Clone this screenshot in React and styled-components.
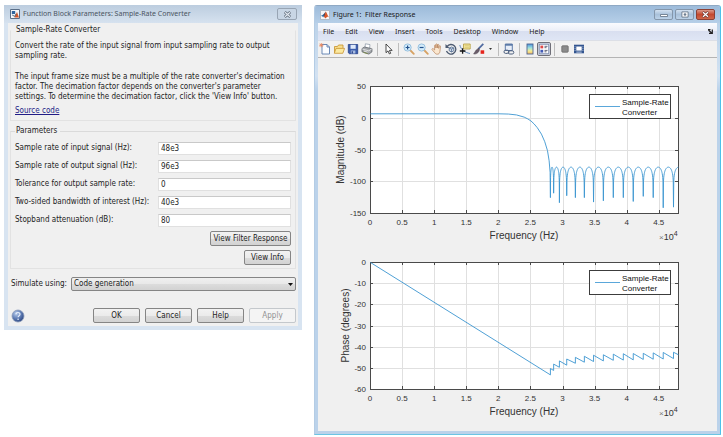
import React, { useId, useState } from "react";
import styled, { createGlobalStyle } from "styled-components";

const GlobalStyle = createGlobalStyle`
  *, *::before, *::after { box-sizing: border-box; }
  body { margin: 0; background: #fff; }
`;

const dialogFont = `"DejaVu Sans Condensed", "DejaVu Sans", sans-serif`;
const frameFont = `"Noto Sans", "Open Sans", sans-serif`;

const Desktop = styled.main`
  display: grid;
  grid-template-columns: minmax(0, 298fr) minmax(0, 407fr);
  gap: 12px;
  align-items: start;
  padding: 5px 2px 0 4px;
`;

/* ---------- Window frames ---------- */

const DialogFrame = styled.section`
  padding: 0 4px 4px;
  background: #d8e4f1;
  font: 8px/10px ${dialogFont};
  color: #1c1c1c;
`;

const FigureFrame = styled.section`
  padding: 0 3px 3px;
  background: linear-gradient(#b4cde6, #d3e2f2 70px, #bbd2ea 84px);
  border: 1px solid #b4cce4;
  border-top-color: #8fa9c4;
  border-right-color: #4cc0ea;
  border-bottom-color: #6cc4e4;
  border-radius: 3px 3px 0 0;
  font: 7px/10px ${frameFont};
  color: #1a1a1a;
`;

const DialogTitle = styled.header`
  display: flex;
  align-items: center;
  gap: 3px;
  height: 18px;
  margin: 0 -4px;
  padding: 0 5px 0 6px;
  background: linear-gradient(#bccddf, #d6e2ef);
  font: 7px/10px ${frameFont};
  color: #4a5461;
`;

const FigureTitle = styled.header`
  display: flex;
  align-items: center;
  gap: 3px;
  height: 17px;
  margin: 0 -3px;
  padding: 0 5px;
  background: linear-gradient(#9dbbda, #b6cfe8);
  border-radius: 3px 3px 0 0;
`;

const TitleText = styled.h1`
  flex: 1;
  min-width: 0;
  margin: 0;
  overflow: hidden;
  white-space: pre;
  font: inherit;
`;

const DialogClose = styled.button`
  display: grid;
  place-items: center;
  width: 20px;
  height: 12px;
  padding: 0;
  border: 1px solid #98a5b4;
  border-radius: 2px;
  background: #c8d6e5;
`;

const WindowButtons = styled.div`
  display: flex;
  gap: 2px;
`;

const CaptionButton = styled.button`
  display: grid;
  place-items: center;
  width: 19px;
  height: 11px;
  padding: 0;
  border: 1px solid ${(p) => (p.$close ? "#8c4034" : "#8496aa")};
  border-radius: 2px;
  background: ${(p) =>
    p.$close
      ? "linear-gradient(#dc9a8a, #c4492f 50%, #d0674a)"
      : "linear-gradient(#d3e1f0, #a9c1da 50%, #bcd2e8)"};
`;

/* ---------- Dialog body ---------- */

const DialogBody = styled.form`
  padding: 2px 2px 3px;
  background: #f0f0f0;
`;

const Group = styled.fieldset`
  display: flex;
  flex-direction: column;
  min-width: 0;
  margin: 0;
  padding: ${(p) => (p.$compact ? "6px 4px 4px" : "5px 4px 3px")};
  border: 1px solid #e2e2e2;
  border-top-color: ${(p) => (p.$compact ? "transparent" : "#dadada")};
  & + & { margin-top: 5px; }
`;

const Legend = styled.legend`
  padding: 0 3px 0 1px;
`;

const Paragraph = styled.p`
  margin: 0 0 11px;
  &:last-of-type { margin-bottom: 4px; }
`;

const SourceLink = styled.a`
  align-self: flex-start;
  color: #221c86;
`;

const Params = styled.div`
  display: flex;
  flex-direction: column;
  gap: 4px;
`;

const ParamRow = styled.div`
  display: grid;
  grid-template-columns: minmax(0, 143fr) minmax(0, 133fr);
  align-items: center;
  height: 14px;
`;

const Label = styled.label`
  white-space: nowrap;
`;

const TextField = styled.input`
  width: 100%;
  height: 13px;
  padding: 0 2px;
  border: 1px solid #e0e0e0;
  border-top-color: #c9c9c9;
  background: #fff;
  font: inherit;
  color: inherit;
`;

const ActionStack = styled.div`
  display: flex;
  flex-direction: column;
  align-items: flex-end;
  gap: 4px;
  margin-top: 4px;
`;

const PushButton = styled.button`
  width: ${(p) => p.$width}px;
  height: 15px;
  padding: 0;
  border: 1px solid ${(p) => (p.disabled ? "#c4c8cc" : "#858585")};
  border-radius: 2px;
  background: ${(p) =>
    p.disabled ? "#f4f4f4" : "linear-gradient(#f2f2f2, #ebebeb 50%, #dcdcdc 51%, #d2d2d2)"};
  font: inherit;
  color: ${(p) => (p.disabled ? "#909090" : "inherit")};
  white-space: nowrap;
`;

const SimulateRow = styled.div`
  display: flex;
  align-items: center;
  gap: 4px;
  margin-top: 8px;
  padding-left: 1px;
`;

const SelectShell = styled.div`
  position: relative;
  flex: 1;
  svg {
    position: absolute;
    right: 3px;
    top: 6px;
    pointer-events: none;
  }
`;

const Select = styled.select`
  display: block;
  appearance: none;
  width: 100%;
  height: 14px;
  padding: 0 10px 0 2px;
  border: 1px solid #858585;
  border-radius: 2px;
  background: linear-gradient(#f0f0f0, #e8e8e8 50%, #dcdcdc 51%, #d2d2d2);
  font: inherit;
  color: inherit;
`;

const Footer = styled.footer`
  display: flex;
  align-items: center;
  gap: 5px;
  margin-top: 17px;
`;

const HelpButton = styled.button`
  display: flex;
  margin-right: auto;
  padding: 0 0 0 1px;
  border: 0;
  background: none;
`;

/* ---------- Figure body ---------- */

const MenuBar = styled.nav`
  display: flex;
  align-items: center;
  gap: 11px;
  height: 17px;
  padding: 0 4px 0 5px;
  background: linear-gradient(#fafbfe, #eceff8 45%, #d9dff0 50%, #dfe6f5);
`;

const MenuItem = styled.button`
  padding: 0;
  border: 0;
  background: none;
  font: inherit;
  color: inherit;
`;

const UndockButton = styled(MenuItem)`
  display: flex;
  margin-left: auto;
`;

const ToolBar = styled.div`
  display: flex;
  align-items: center;
  height: 18px;
  background: #f1f1f1;
  border-top: 1px solid #dcdfe6;
  border-bottom: 1px solid #b4b4b4;
`;

const ToolButton = styled.button`
  display: grid;
  place-items: center;
  flex: none;
  width: ${(p) => (p.$narrow ? 9 : 14)}px;
  height: 14px;
  padding: 0;
  border: 1px solid ${(p) => (p.$pressed ? "#6f6f78" : "transparent")};
  border-radius: 2px;
  background: ${(p) => (p.$pressed ? "#dfe3ec" : "none")};
  svg { display: block; }
`;

const Divider = styled.span`
  flex: none;
  width: 1px;
  height: 13px;
  margin: 0 3px;
  background: #bdbdbd;
`;

const Canvas = styled.div`
  display: flex;
  flex-direction: column;
  padding: 16px 0 5px;
  background: #f0f0f0;
`;

const PlotSvg = styled.svg`
  display: block;
  width: 100%;
  height: auto;
  font-family: "Liberation Sans", Arial, sans-serif;
  font-size: 8px;
  fill: #333;
`;

/* ---------- Icons ---------- */

const Icon = ({ size = 12, children }) => (
  <svg width={size} height={size} viewBox="0 0 12 12" fill="none" aria-hidden="true">
    {children}
  </svg>
);

const NewIcon = () => (
  <Icon>
    <path d="M3 1.5h5l2.5 2.5v7H3z" fill="#fbfdff" stroke="#5b7dae" strokeWidth=".9" />
    <path d="M8 1.5V4h2.5" stroke="#5b7dae" strokeWidth=".9" />
    <path d="M2.3 0v4.4M.1 2.2h4.4M.8.7l3 3M3.8.7l-3 3" stroke="#ea8459" strokeWidth=".8" />
  </Icon>
);
const OpenIcon = () => (
  <Icon>
    <path d="M1.5 10V3.5h3l1-1.5H10v3" fill="#f8df8d" stroke="#c58f28" strokeWidth=".8" />
    <path d="M1.3 10.3 3 5.4h8.6L9.8 10.3z" fill="#fbe9a0" stroke="#c99430" strokeWidth=".8" />
  </Icon>
);
const SaveIcon = () => (
  <Icon>
    <path d="M1.3 1.5h9.4v9.2H2.4l-1.1-1z" fill="#3b5dac" stroke="#243f86" strokeWidth=".8" />
    <path d="M3.5 1.8h5.2v4H3.5z" fill="#dfe9fa" />
    <path d="M3.8 7.5h4.6v3H3.8z" fill="#a9bce0" />
    <path d="M4.6 8.2h1.3v2.2H4.6z" fill="#26418a" />
  </Icon>
);
const PrintIcon = () => (
  <Icon>
    <path d="m4 5 .4-4.2L9 1.6 8.5 5.6" fill="#fff" stroke="#8792a0" strokeWidth=".7" />
    <path d="M1 5.6 3.4 4l7.6 1.7-.1 3.2-3 2.2L1 8.8z" fill="#a6a9ad" stroke="#5f646b" strokeWidth=".8" />
    <path d="m1.3 6 6.5 1.9 3-2.1M3 8.1l3.4 1" stroke="#ececec" strokeWidth=".8" />
    <path d="m2.5 9.4 4.2 1.2" stroke="#7b8a44" strokeWidth=".9" />
  </Icon>
);
const PointerIcon = () => (
  <Icon>
    <path d="M4 1v8.7l2-1.8 1.3 3 1.4-.6-1.3-2.9h2.7z" fill="#fff" stroke="#222" strokeWidth=".8" />
  </Icon>
);
const MagnifierIcon = ({ minus }) => (
  <Icon>
    <path d="m7 7 3.8 3.8" stroke="#d7a263" strokeWidth="1.8" strokeLinecap="round" />
    <circle cx="4.6" cy="4.5" r="3.6" fill="#d4ecfa" stroke="#8fbbdc" strokeWidth=".9" />
    <path d={minus ? "M2.6 4.5h4" : "M2.6 4.5h4M4.6 2.5v4"} stroke="#22518c" strokeWidth="1.2" />
  </Icon>
);
const HandIcon = () => (
  <Icon>
    <path
      d="M3.6 7V2.6c0-1 1.2-1 1.3 0V5 1.6c0-1 1.3-1 1.4 0V5l.2-3c.1-1 1.3-.9 1.3.1l-.1 3.3.5-2.2c.3-.9 1.4-.6 1.3.3L8.9 8.6c-.3 1.6-1 2.6-2.6 2.6-1.5 0-2.1-.7-3-2L1.1 6.7c-.4-.8.5-1.5 1.2-.9z"
      fill="#fbe7cf" stroke="#b67f58" strokeWidth=".7"
    />
  </Icon>
);
const RotateIcon = () => (
  <Icon>
    <path d="M2.1 3.5A4.8 4.8 0 1 1 1.5 8" stroke="#4c5a70" strokeWidth="1.3" />
    <path d="M.5 1v4h3.9z" fill="#4c5a70" />
    <path d="m4.2 5 2.4-1 2.2 1v2.8L6.5 9 4.2 7.8z" fill="#cfdbea" stroke="#4f688c" strokeWidth=".8" />
    <path d="m4.2 5 2.3 1 2.3-1M6.5 6v3" stroke="#4f688c" strokeWidth=".7" />
  </Icon>
);
const DataCursorIcon = () => (
  <Icon>
    <path d="M4.5 1h6.7v5H4.5z" fill="#f5e79a" stroke="#b39a3e" strokeWidth=".8" />
    <path d="M5.7 2.7h4.2M5.7 4.3h4.2" stroke="#c8b764" strokeWidth=".6" />
    <path d="M.8 2C2 7 6 9.5 11 10.5" stroke="#5a83b9" strokeWidth=".9" />
    <path d="M3.6 5.2v5.6M.8 8h5.6" stroke="#151515" strokeWidth="1.3" />
  </Icon>
);
const BrushIcon = () => (
  <Icon>
    <path d="M10.3.8 5.2 6.2" stroke="#506ba0" strokeWidth="1.7" />
    <path d="M5.8 5.2 3.2 7C2 8 1.8 10 .6 11c2.3.3 5.1-.8 5.9-4.3z" fill="#6a5c69" stroke="#514954" strokeWidth=".5" />
    <path d="M7.6 7.3h3.6v3.5H7.6z" fill="#e5241c" />
  </Icon>
);
const DropIcon = () => (
  <svg width="5" height="3" viewBox="0 0 5 3" aria-hidden="true">
    <path d="M1 0h3L2.5 2z" fill="#333" />
  </svg>
);
const LinkIcon = () => (
  <Icon>
    <path d="M2.3 1h7v6.5h-7z" fill="#e6edf8" stroke="#5070a0" strokeWidth=".9" />
    <path d="M2.3 1.9h7" stroke="#5070a0" strokeWidth="1.5" />
    <rect x="1" y="7.2" width="5" height="3.2" rx="1.6" stroke="#4d5f7d" strokeWidth="1" />
    <rect x="5.2" y="7.8" width="5.6" height="3.2" rx="1.6" stroke="#4d5f7d" strokeWidth="1" />
  </Icon>
);
const ColorbarIcon = () => {
  const id = useId();
  return (
    <Icon>
      <linearGradient id={id} x1="0" y1="0" x2="0" y2="1">
        <stop offset="0" stopColor="#4c93de" />
        <stop offset=".4" stopColor="#9fe3dd" />
        <stop offset=".7" stopColor="#f6ec92" />
        <stop offset="1" stopColor="#f3b45f" />
      </linearGradient>
      <rect x="3" y="1" width="6" height="10" fill={`url(#${id})`} stroke="#4e6590" strokeWidth=".9" />
    </Icon>
  );
};
const LegendIcon = () => (
  <Icon>
    <path d="M1.2 1.2h9.6v9.6H1.2z" fill="#fff" stroke="#5b6d98" strokeWidth=".8" />
    <path d="M2.4 2.6h2.8v2.8H2.4z" fill="#dc4848" />
    <path d="M2.4 6.8h2.8v2.8H2.4z" fill="#4159b4" />
    <path d="M6.5 3.3h3M6.5 4.7h2M6.5 7.4h3M6.5 8.8h2" stroke="#3b3f58" strokeWidth=".8" />
  </Icon>
);
const HideToolsIcon = () => (
  <Icon>
    <rect x="2.8" y="2.8" width="6.4" height="6.4" rx=".8" fill="#8b8b8b" stroke="#6b6b6b" strokeWidth=".8" />
  </Icon>
);
const ShowToolsIcon = () => (
  <Icon>
    <path d="M1 1.7h10v8.6H1z" fill="#33558f" />
    <path d="M3.3 3.5h5.4v4.1H3.3z" fill="#fff" />
    <path d="M1.6 3.8h.9M1.6 5.6h.9M1.6 7.4h.9M9.5 3.8h.9M9.5 5.6h.9M9.5 7.4h.9M3.3 9.1h5.4" stroke="#dfe8f7" strokeWidth=".8" />
  </Icon>
);
const BlockIcon = () => (
  <svg width="10" height="10" viewBox="0 0 10 10" aria-hidden="true">
    <path d="M.5.5h9v9h-9z" fill="#f5f7fa" stroke="#5b6f88" />
    <path d="M1.8 2h3.4v3H1.8z" fill="#2f659e" />
    <path d="M4.4 8.6 7 3l2 5.6z" fill="#d1572a" />
    <path d="m2.2 6 2.5 1.4L6 5" fill="none" stroke="#30475f" strokeWidth=".8" />
  </svg>
);
const MatlabIcon = () => (
  <svg width="10" height="10" viewBox="0 0 10 10" aria-hidden="true">
    <path d="M.5.5h9v9h-9z" fill="#f4f5f7" stroke="#a9b1ba" strokeWidth=".8" />
    <path d="m1 5.8 2.4-1.2 1 .9-1.2 1.6z" fill="#3274ad" />
    <path d="m3.4 4.6 2.4-3-.9 4.9-1 .9z" fill="#36405c" />
    <path d="M5.8 1.6c.8 1.1 1.6 3.8 3.2 5.7-1.4-.9-2.2-.4-3.4 1.2L4 6.8z" fill="#da5627" />
  </svg>
);
const HelpIcon = () => {
  const id = useId();
  return (
    <svg width="14" height="14" viewBox="0 0 14 14" aria-hidden="true">
      <radialGradient id={id} cx=".35" cy=".3" r=".75">
        <stop offset="0" stopColor="#b9cdec" />
        <stop offset=".5" stopColor="#6583ba" />
        <stop offset="1" stopColor="#2c4681" />
      </radialGradient>
      <circle cx="7" cy="7" r="6" fill={`url(#${id})`} stroke="#8b9cba" strokeWidth=".8" />
      <path d="M5 5.3c0-2.4 4-2.4 4-.1C9 6.7 7.1 6.7 7.1 8.3" fill="none" stroke="#e6eefb" strokeWidth="1.2" />
      <circle cx="7.1" cy="10.2" r=".8" fill="#e6eefb" />
    </svg>
  );
};
const CrossIcon = ({ outline, fill }) => (
  <svg width="9" height="7" viewBox="0 0 9 7" aria-hidden="true">
    <path d="m1.8 1 5.4 5M7.2 1 1.8 6" stroke={outline} strokeWidth="2.6" />
    <path d="m2 1.2 5 4.6M7 1.2 2 5.8" stroke={fill} strokeWidth="1.2" />
  </svg>
);
const MinimizeIcon = () => (
  <svg width="8" height="7" viewBox="0 0 8 7" aria-hidden="true">
    <path d="M.5 3.5h7v2h-7z" fill="#fff" stroke="#5f6e80" strokeWidth=".8" />
  </svg>
);
const MaximizeIcon = () => (
  <svg width="8" height="7" viewBox="0 0 8 7" aria-hidden="true">
    <path d="M.9.9h6.2v5.2H.9z" fill="#fff" stroke="#5f6e80" strokeWidth=".8" />
    <path d="M3 2.8h2v1.4H3z" fill="#7d90a8" stroke="#5f6e80" strokeWidth=".6" />
  </svg>
);
const UndockIcon = () => (
  <svg width="5" height="5" viewBox="0 0 5 5" aria-hidden="true">
    <path d="M0 .7h2.5M.5 1.2l3 2.6M4.3.6V4.3H1" fill="none" stroke="#222" strokeWidth="1.2" />
  </svg>
);

/* ---------- Plots ---------- */

const AXES = { left: 52, right: 360, top: 12, height: 127, maxFreq: 4.8 };
const FREQ_TICKS = [0, 0.5, 1, 1.5, 2, 2.5, 3, 3.5, 4, 4.5];

// Stopband nulls: frequency (x10^4 Hz), magnitude floor (dB),
// phase before the jump and phase after it (degrees).
const NULLS = [
  [2.804, -125, -53.1, -50.1],
  [2.854, -118, -51, -48],
  [2.944, -133, -49.5, -46.5],
  [3.058, -122, -48.5, -45.6],
  [3.193, -125, -47.6, -44.8],
  [3.333, -125, -47.1, -44.3],
  [3.476, -132, -46.8, -43.8],
  [3.629, -130, -46.5, -43.6],
  [3.784, -125, -46.2, -43.3],
  [3.94, -125, -46.1, -43.1],
  [4.095, -131, -46, -43],
  [4.251, -123, -45.8, -42.9],
  [4.406, -125, -45.7, -42.7],
  [4.562, -141, -45.6, -42.5],
  [4.722, -140, -45.4, -42.4],
  [4.882, -140, -45.3, -42.3],
];

const magnitudeData = (() => {
  const points = [
    [0, 7], [2, 7], [2.15, 6.6], [2.276, 5.2], [2.395, 1.8], [2.45, -1], [2.5, -4.2],
    [2.55, -9], [2.6, -15], [2.664, -25], [2.716, -37], [2.758, -51], [2.784, -67],
    [2.799, -85], [2.804, -125],
  ];
  for (let i = 0; i < NULLS.length - 1; i++) {
    const [from, floorA] = NULLS[i];
    const [to, floorB] = NULLS[i + 1];
    for (let s = 1; s <= 40; s++) {
      const t = s / 40;
      const f = from + (to - from) * t;
      if (f > AXES.maxFreq) break;
      const level = -77 + 20 * Math.log10(Math.sin(Math.PI * t) + 1e-9);
      points.push([f, Math.max(level, t < 0.5 ? floorA : floorB)]);
    }
  }
  return points;
})();

const phaseData = [
  [0, 0],
  ...NULLS.slice(0, -1).flatMap(([f, , before, after]) => [[f, before], [f, after]]),
  [4.8, -43.6],
];

function Plot({ title, titleX, yMin, yMax, yTicks, data }) {
  const { left, right, top, height, maxFreq } = AXES;
  const bottom = top + height;
  const sx = (f) => left + (f / maxFreq) * (right - left);
  const sy = (v) => top + ((yMax - v) / (yMax - yMin)) * height;
  const snap = (v) => Math.round(v) + 0.5;
  const middle = (top + bottom) / 2;
  return (
    <PlotSvg viewBox="0 0 399 176" role="img" aria-label={`${title} against frequency`}>
      <rect x={left} y={top} width={right - left} height={height} fill="#fff" />
      <g stroke="#e0e0e0">
        {FREQ_TICKS.slice(1).map((f) => <path key={f} d={`M${snap(sx(f))} ${top}v${height}`} />)}
        {yTicks.slice(1, -1).map((v) => <path key={v} d={`M${left} ${snap(sy(v))}H${right}`} />)}
      </g>
      <g stroke="#4a4a4a" fill="none">
        <rect x={left + 0.5} y={top + 0.5} width={right - left} height={height} />
        {FREQ_TICKS.slice(1).map((f) => (
          <path key={f} d={`M${snap(sx(f))} ${top}v3M${snap(sx(f))} ${bottom}v-3`} />
        ))}
        {yTicks.slice(1, -1).map((v) => (
          <path key={v} d={`M${left} ${snap(sy(v))}h3M${right} ${snap(sy(v))}h-3`} />
        ))}
      </g>
      <polyline
        points={data.map(([f, v]) => `${(sx(f) + 0.5).toFixed(2)},${(sy(v) + 0.5).toFixed(2)}`).join(" ")}
        fill="none" stroke="#3b95d0" strokeWidth=".9" strokeLinejoin="round"
      />
      {FREQ_TICKS.map((f) => (
        <text key={f} x={sx(f)} y={bottom + 12} textAnchor="middle">{f}</text>
      ))}
      {yTicks.map((v) => (
        <text key={v} x={left - 4} y={sy(v) + 3} textAnchor="end">{v}</text>
      ))}
      <text x={(left + right) / 2} y={bottom + 26} textAnchor="middle" fontSize="10">Frequency (Hz)</text>
      <text x={titleX} y={middle} transform={`rotate(-90 ${titleX} ${middle})`} textAnchor="middle" fontSize="10">
        {title}
      </text>
      <text x="341" y={bottom + 27} fontSize="9">
        <tspan fontSize="8" fill="#777">×</tspan>10<tspan dy="-4" fontSize="7">4</tspan>
      </text>
      <rect x="271.5" y="20.5" width="81" height="24" fill="#fff" stroke="#3c3c3c" />
      <path d="M277 32.5h25" stroke="#5aa7da" />
      <g fill="#111">
        <text x="304" y="31">Sample-Rate</text>
        <text x="304" y="41">Converter</text>
      </g>
    </PlotSvg>
  );
}

/* ---------- Page ---------- */

const PARAMETERS = [
  ["input-rate", "Sample rate of input signal (Hz):", "48e3"],
  ["output-rate", "Sample rate of output signal (Hz):", "96e3"],
  ["tolerance", "Tolerance for output sample rate:", "0"],
  ["bandwidth", "Two-sided bandwidth of interest (Hz):", "40e3"],
  ["attenuation", "Stopband attenuation (dB):", "80"],
];

const MENUS = ["File", "Edit", "View", "Insert", "Tools", "Desktop", "Window", "Help"];

const TOOL_GROUPS = [
  [["New figure", NewIcon], ["Open", OpenIcon], ["Save", SaveIcon], ["Print", PrintIcon]],
  [["Edit plot", PointerIcon]],
  [
    ["Zoom in", MagnifierIcon],
    ["Zoom out", MagnifierIcon, { minus: true }],
    ["Pan", HandIcon],
    ["Rotate 3D", RotateIcon],
    ["Data cursor", DataCursorIcon],
    ["Brush", BrushIcon],
    ["Brush options", DropIcon],
  ],
  [["Link plot", LinkIcon]],
  [["Insert colorbar", ColorbarIcon], ["Insert legend", LegendIcon]],
  [["Hide plot tools", HideToolsIcon], ["Show plot tools", ShowToolsIcon]],
];

function ParameterDialog() {
  const [values, setValues] = useState(() =>
    Object.fromEntries(PARAMETERS.map(([id, , value]) => [id, value]))
  );
  return (
    <DialogFrame>
      <DialogTitle>
        <BlockIcon />
        <TitleText>Function Block Parameters: Sample-Rate Converter</TitleText>
        <DialogClose type="button" aria-label="Close dialog">
          <CrossIcon outline="#5d6977" fill="#e3eaf2" />
        </DialogClose>
      </DialogTitle>
      <DialogBody onSubmit={(e) => e.preventDefault()}>
        <Group $compact>
          <Legend>Sample-Rate Converter</Legend>
          <Paragraph>
            Convert the rate of the input signal from input sampling rate to output sampling rate.
          </Paragraph>
          <Paragraph>
            The input frame size must be a multiple of the rate converter's decimation factor. The
            decimation factor depends on the converter's parameter settings. To determine the
            decimation factor, click the 'View Info' button.
          </Paragraph>
          <SourceLink href="#source">Source code</SourceLink>
        </Group>
        <Group>
          <Legend>Parameters</Legend>
          <Params>
            {PARAMETERS.map(([id, label]) => (
              <ParamRow key={id}>
                <Label htmlFor={id}>{label}</Label>
                <TextField
                  id={id}
                  value={values[id]}
                  onChange={(e) => setValues({ ...values, [id]: e.target.value })}
                />
              </ParamRow>
            ))}
          </Params>
          <ActionStack>
            <PushButton type="button" $width={81}>View Filter Response</PushButton>
            <PushButton type="button" $width={47}>View Info</PushButton>
          </ActionStack>
        </Group>
        <SimulateRow>
          <Label htmlFor="simulate">Simulate using:</Label>
          <SelectShell>
            <Select id="simulate" defaultValue="code">
              <option value="code">Code generation</option>
              <option value="interpreted">Interpreted execution</option>
            </Select>
            <svg width="5" height="3" viewBox="0 0 5 3" aria-hidden="true">
              <path d="M0 0h5L2.5 3z" fill="#111" />
            </svg>
          </SelectShell>
        </SimulateRow>
        <Footer>
          <HelpButton type="button" aria-label="Help topics"><HelpIcon /></HelpButton>
          <PushButton type="submit" $width={47}>OK</PushButton>
          <PushButton type="button" $width={47}>Cancel</PushButton>
          <PushButton type="button" $width={47}>Help</PushButton>
          <PushButton type="button" $width={47} disabled>Apply</PushButton>
        </Footer>
      </DialogBody>
    </DialogFrame>
  );
}

function FigureWindow() {
  return (
    <FigureFrame>
      <FigureTitle>
        <MatlabIcon />
        <TitleText>{"Figure 1:  Filter Response"}</TitleText>
        <WindowButtons>
          <CaptionButton type="button" aria-label="Minimize"><MinimizeIcon /></CaptionButton>
          <CaptionButton type="button" aria-label="Maximize"><MaximizeIcon /></CaptionButton>
          <CaptionButton type="button" aria-label="Close" $close>
            <CrossIcon outline="#6d3a35" fill="#fff" />
          </CaptionButton>
        </WindowButtons>
      </FigureTitle>
      <MenuBar>
        {MENUS.map((name) => <MenuItem key={name} type="button">{name}</MenuItem>)}
        <UndockButton type="button" aria-label="Dock figure"><UndockIcon /></UndockButton>
      </MenuBar>
      <ToolBar>
        {TOOL_GROUPS.map((group, index) => (
          <React.Fragment key={index}>
            {index > 0 && <Divider />}
            {group.map(([name, Glyph, props]) => (
              <ToolButton
                key={name}
                type="button"
                title={name}
                aria-label={name}
                $pressed={name === "Insert legend"}
                $narrow={name === "Brush options"}
              >
                <Glyph {...props} />
              </ToolButton>
            ))}
          </React.Fragment>
        ))}
      </ToolBar>
      <Canvas>
        <Plot title="Magnitude (dB)" titleX={26} yMin={-150} yMax={50} yTicks={[50, 0, -50, -100, -150]} data={magnitudeData} />
        <Plot title="Phase (degrees)" titleX={31} yMin={-60} yMax={0} yTicks={[0, -10, -20, -30, -40, -50, -60]} data={phaseData} />
      </Canvas>
    </FigureFrame>
  );
}

export default function App() {
  return (
    <>
      <GlobalStyle />
      <Desktop>
        <ParameterDialog />
        <FigureWindow />
      </Desktop>
    </>
  );
}
